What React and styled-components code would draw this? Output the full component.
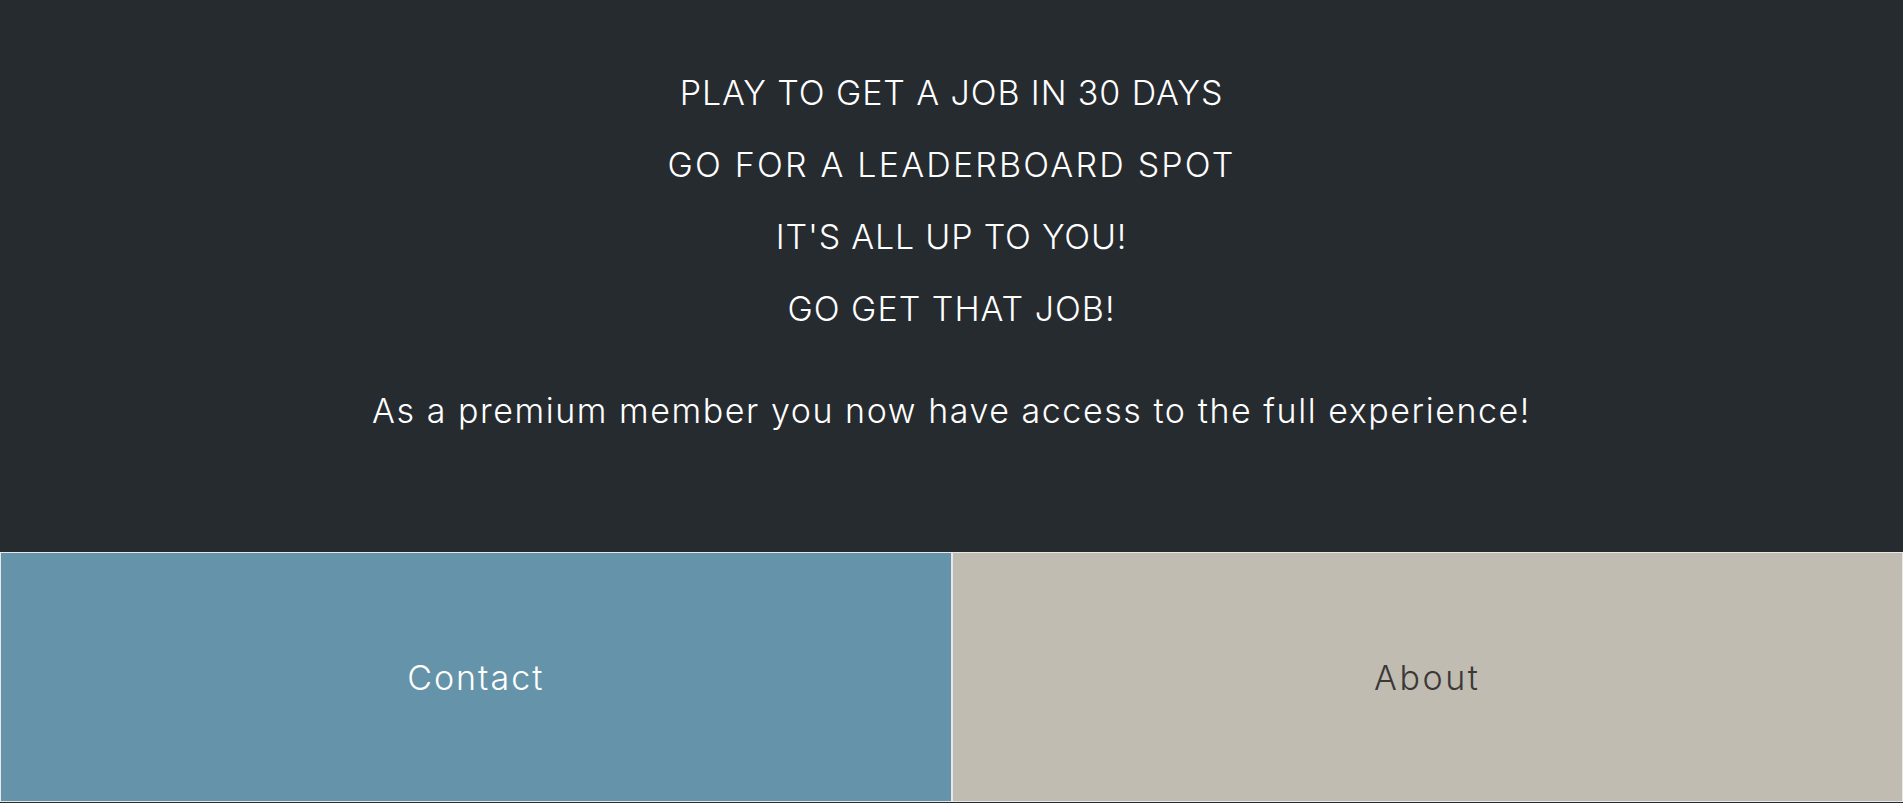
import styled, { createGlobalStyle } from "styled-components";

const GlobalStyle = createGlobalStyle`
    html {
        overflow-y: scroll;
    }
    html::-webkit-scrollbar {
        width: 4px;
    }
    html::-webkit-scrollbar-track {
        background: #f1f1f1;
    }
    html::-webkit-scrollbar-thumb {
        background: #c1c1c1;
    }
    body {
        margin: 0;
        background: #262b30;
        font-family: Inter, "Noto Sans", sans-serif;
        font-weight: 300;
    }
`;

const Page = styled.main`
    display: flex;
    flex-direction: column;
    min-height: 803px;
`;

const Hero = styled.section`
    display: flex;
    flex-direction: column;
    align-items: center;
    padding: 57px 0 105px;
    color: #ffffff;
    text-align: center;
`;

const Slogan = styled.h2`
    margin: 0;
    font-size: 34px;
    font-weight: 300;
    line-height: 72px;
    letter-spacing: ${(p) => p.$spacing || "1.4px"};
`;

const Note = styled.p`
    margin: 30px 0 0;
    font-size: 34px;
    line-height: 72px;
    letter-spacing: 1.55px;
`;

const Tiles = styled.nav`
    display: grid;
    grid-template-columns: 1fr 1fr;
    height: 250px;
`;

const Tile = styled.a`
    display: flex;
    align-items: center;
    justify-content: center;
    background: ${(p) => p.$bg};
    color: ${(p) => p.$fg};
    border: 1px solid #e8e8e8;
    font-size: 34px;
    letter-spacing: ${(p) => p.$spacing};
    text-decoration: none;
    cursor: pointer;
`;

const slogans = [
    { text: "PLAY TO GET A JOB IN 30 DAYS", spacing: "0.9px" },
    { text: "GO FOR A LEADERBOARD SPOT", spacing: "2.2px" },
    { text: "IT'S ALL UP TO YOU!", spacing: "0.8px" },
    { text: "GO GET THAT JOB!", spacing: "1px" },
];

export default function App() {
    return (
        <>
            <GlobalStyle />
            <Page>
                <Hero>
                    {slogans.map((s) => (
                        <Slogan key={s.text} $spacing={s.spacing}>
                            {s.text}
                        </Slogan>
                    ))}
                    <Note>
                        As a premium member you now have access to the full
                        experience!
                    </Note>
                </Hero>
                <Tiles>
                    <Tile $bg="#6594aa" $fg="#ffffff" $spacing="2px">
                        Contact
                    </Tile>
                    <Tile $bg="#c1bcb1" $fg="#3b3838" $spacing="2.6px">
                        About
                    </Tile>
                </Tiles>
            </Page>
        </>
    );
}
